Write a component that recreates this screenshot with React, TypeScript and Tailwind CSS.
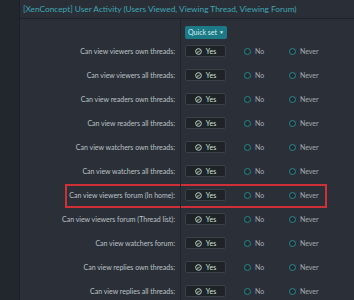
import React from 'react';

const rows = [
  'Can view viewers own threads:',
  'Can view viewers all threads:',
  'Can view readers own threads:',
  'Can view readers all threads:',
  'Can view watchers own threads:',
  'Can view watchers all threads:',
  'Can view viewers forum (In home):',
  'Can view viewers forum (Thread list):',
  'Can view watchers forum:',
  'Can view replies own threads:',
  'Can view replies all threads:',
];

function CheckIcon() {
  return (
    <svg width="7" height="7" viewBox="0 0 16 16" fill="none" stroke="#cfe8d2" strokeWidth="2">
      <circle cx="8" cy="8" r="6.5" />
      <path d="M4.8 8.3l2.2 2.1 4.2-4.6" />
    </svg>
  );
}

function Radio({ label }: { label: string }) {
  return (
    <div className="flex items-center gap-[4px]">
      <span className="w-[7px] h-[7px] rounded-full border border-[#1f8c8f] bg-[#252a31]" />
      <span className="text-[#a4aab0]">{label}</span>
    </div>
  );
}

export default function App() {
  return (
    <div
      className="w-[354px] h-[300px] flex overflow-hidden bg-[#22272e] text-[7px] leading-none"
      style={{ fontFamily: 'Lato, "Open Sans", sans-serif' }}
    >
      <div className="w-[19px] shrink-0 bg-[#22272e]" />
      <div className="relative flex-1 flex flex-col bg-[#2b3038] border-l border-[#1d2127]">
        <div className="h-[19px] shrink-0 flex items-center px-[3px] border-b border-[#1f2329] bg-[#2a2f37]">
          <span className="text-[8.3px] text-[#3ea6b4]">
            [XenConcept] User Activity (Users Viewed, Viewing Thread, Viewing Forum)
          </span>
        </div>
        <div className="absolute left-[45px] top-[184px] w-[262px] h-[24px] border-2 border-[#cf2f37]" />
        <div className="relative flex-1 grid grid-cols-[161px_1fr]">
          <div className="border-r border-[#20242a] flex flex-col">
            <div className="h-[20px] shrink-0" />
            {rows.map((r) => (
              <div key={r} className="h-[24px] shrink-0 flex items-center justify-end pr-[5px] text-[#bcc1c6]">
                {r}
              </div>
            ))}
          </div>
          <div className="flex flex-col pl-[4px]">
            <div className="h-[20px] shrink-0 pt-[7px]">
              <button className="h-[13px] w-[42px] rounded-[2px] bg-[#1c7a86] text-[#d6eef1] text-[7px] flex items-center justify-center gap-[2px]">
                Quick set
                <span className="text-[5px]">▼</span>
              </button>
            </div>
            {rows.map((r) => (
              <div key={r} className="h-[24px] shrink-0 flex items-center">
                <div className="w-[41px] h-[12px] rounded-[2px] bg-[#1e2328] border border-[#3a4047] flex items-center justify-center gap-[4px]">
                  <CheckIcon />
                  <span className="text-[#cfe3d3]">Yes</span>
                </div>
                <div className="ml-[18px] w-[45px]">
                  <Radio label="No" />
                </div>
                <Radio label="Never" />
              </div>
            ))}
          </div>
        </div>
      </div>
    </div>
  );
}
